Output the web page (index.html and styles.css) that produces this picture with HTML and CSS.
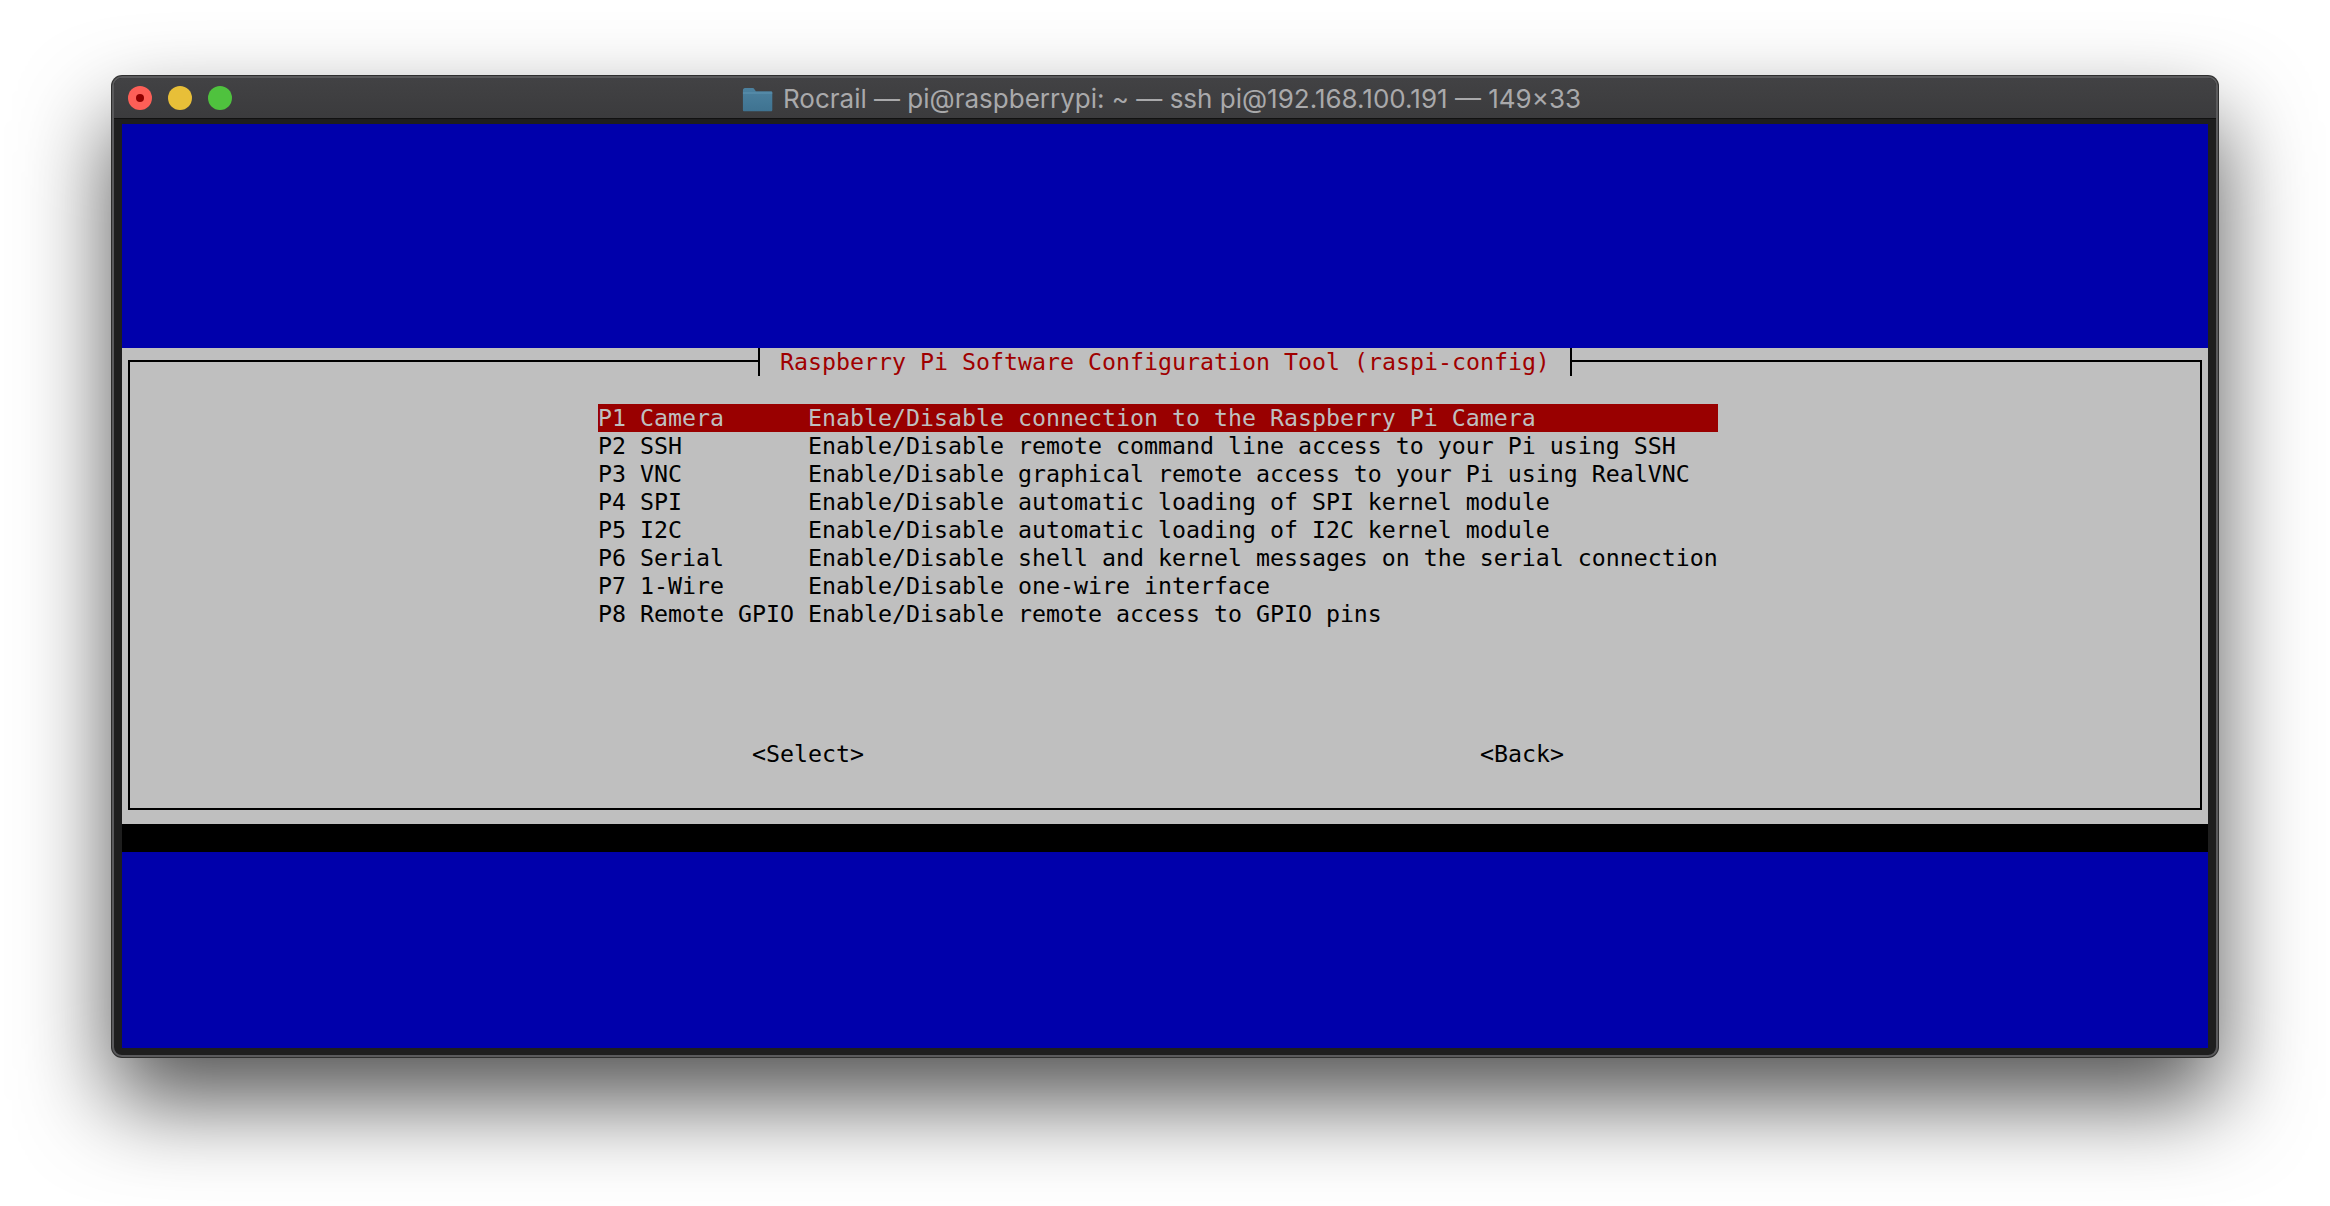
FILE: index.html
```html
<!DOCTYPE html>
<html lang="en">
<head>
<meta charset="utf-8">
<title>Rocrail — raspi-config</title>
<link rel="stylesheet" href="styles.css">
</head>
<body>
<main class="window">
  <header class="titlebar">
    <div class="lights">
      <span class="light light-close"></span>
      <span class="light light-min"></span>
      <span class="light light-max"></span>
    </div>
    <div class="title">
      <svg class="folder" viewBox="0 0 30 24" aria-hidden="true">
        <defs>
          <linearGradient id="folder-fill" x1="0" y1="0" x2="0" y2="1">
            <stop offset="0" stop-color="#4c819f"/>
            <stop offset="1" stop-color="#3f7391"/>
          </linearGradient>
        </defs>
        <path d="M1 3.500C1 2.100 1.800 1 3 1h7c1 0 1.600.5 2.200 1.300L13.400 4H28c.8 0 1.200.6 1.200 1.400V22c0 .7-.5 1.200-1.200 1.200H2.200C1.500 23.200 1 22.700 1 22z" fill="url(#folder-fill)"/>
        <path d="M1 5.200h28.200v1.100H1z" fill="#5f93b1"/>
      </svg>
      <span>Rocrail — pi@raspberrypi: ~ — ssh pi@192.168.100.191 — 149×33</span>
    </div>
  </header>
  <div class="terminal">
    <div class="screen">
      <div class="blue blue-top"></div>
      <section class="dialog">
        <div class="frame">
          <div class="legend">Raspberry Pi Software Configuration Tool (raspi-config)</div>
          <div class="menu">
            <div class="row row-active">P1 Camera      Enable/Disable connection to the Raspberry Pi Camera</div>
            <div class="row">P2 SSH         Enable/Disable remote command line access to your Pi using SSH</div>
            <div class="row">P3 VNC         Enable/Disable graphical remote access to your Pi using RealVNC</div>
            <div class="row">P4 SPI         Enable/Disable automatic loading of SPI kernel module</div>
            <div class="row">P5 I2C         Enable/Disable automatic loading of I2C kernel module</div>
            <div class="row">P6 Serial      Enable/Disable shell and kernel messages on the serial connection</div>
            <div class="row">P7 1-Wire      Enable/Disable one-wire interface</div>
            <div class="row">P8 Remote GPIO Enable/Disable remote access to GPIO pins</div>
          </div>
          <div class="buttons">
            <span class="button">&lt;Select&gt;</span>
            <span class="button">&lt;Back&gt;</span>
          </div>
        </div>
      </section>
      <div class="shadow-bar"></div>
      <div class="blue blue-bottom"></div>
    </div>
  </div>
</main>
</body>
</html>
```
FILE: styles.css
```css
* { box-sizing: border-box; }

html, body { margin: 0; height: 100%; }

body {
  background: #fff;
  padding: 76px 112px 0;
  overflow: hidden;
}

.window {
  width: 2106px;
  height: 981px;
  display: flex;
  flex-direction: column;
  border: 2px solid #5a5a5c;
  border-radius: 10px;
  overflow: hidden;
  background: #1e1e1e;
  box-shadow:
    0 0 0 1px #2e2e2e,
    0 44px 90px rgba(0, 0, 0, 0.68);
}

.titlebar {
  position: relative;
  height: 41px;
  flex: none;
  display: flex;
  align-items: center;
  justify-content: center;
  background: linear-gradient(#424244, #3b3b3d);
  border-bottom: 1px solid #111;
}

.lights {
  position: absolute;
  left: 14px;
  top: 8px;
  display: flex;
  gap: 16px;
}

.light {
  width: 24px;
  height: 24px;
  border-radius: 50%;
  display: flex;
  align-items: center;
  justify-content: center;
}

.light-close { background: #fd5f57; }
.light-close::after {
  content: "";
  width: 8px;
  height: 8px;
  border-radius: 50%;
  background: #8f0000;
}
.light-min { background: #e8bf38; }
.light-max { background: #4fc23e; }

.title {
  display: flex;
  align-items: center;
  gap: 9px;
  color: #a9a9ab;
  font: 26px/1 "Inter", "Liberation Sans", sans-serif;
  white-space: nowrap;
  transform: translate(-4px, 1px);
}

.folder { width: 33px; height: 25px; flex: none; }

.terminal {
  flex: 1;
  padding: 5px 8px 7px;
}

.screen {
  height: 924px;
  display: flex;
  flex-direction: column;
  font: 23.25px/28px "DejaVu Sans Mono", "Liberation Mono", monospace;
  color: #000;
}

.blue { background: #0000ab; }
.blue-top { height: 224px; }
.blue-bottom { height: 196px; }
.shadow-bar { height: 28px; background: #000; }

.dialog {
  height: 476px;
  background: #bfbfbf;
  padding: 12px 6px 14px;
}

.frame {
  position: relative;
  height: 100%;
  border: 2px solid #000;
  padding: 42px 0 0 468px;
}

.legend {
  position: absolute;
  left: 628px;
  top: -14px;
  width: 814px;
  height: 28px;
  padding-left: 20px;
  background: #bfbfbf;
  border-left: 2px solid #000;
  border-right: 2px solid #000;
  color: #a00000;
  white-space: pre;
}

.menu { width: 1120px; }

.row { height: 28px; white-space: pre; }

.row-active {
  background: #990000;
  color: #bfbfbf;
}

.buttons {
  display: flex;
  gap: 616px;
  margin-top: 112px;
  margin-left: 154px;
}

.button { height: 28px; }
```
